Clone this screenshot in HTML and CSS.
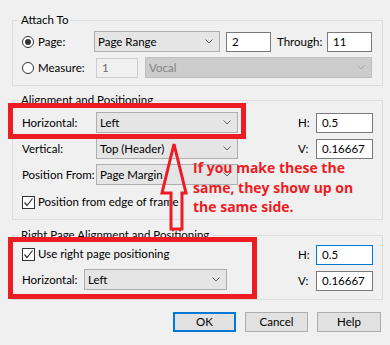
FILE: index.html
```html
<!DOCTYPE html>
<html lang="en">
<head>
  <meta charset="UTF-8">
  <title>Attach To</title>
  <link rel="stylesheet" href="styles.css">
</head>
<body>
  <div class="dialog">
    <fieldset class="group group-attach">
      <legend>Attach To</legend>
      <div class="row">
        <span class="option"><span class="radio on"></span>Page:</span>
        <div class="select select-range">Page Range<svg class="chev" width="8" height="5" viewBox="0 0 8 5"><polyline points="0.5,0.5 4,4 7.5,0.5"/></svg></div>
        <div class="textbox box-num">2</div>
        <span class="through">Through:</span>
        <div class="textbox box-num">11</div>
      </div>
      <div class="row">
        <span class="option option-wide"><span class="radio"></span>Measure:</span>
        <div class="textbox disabled box-measure">1</div>
        <div class="select disabled select-vocal">Vocal<svg class="chev" width="8" height="5" viewBox="0 0 8 5"><polyline points="0.5,0.5 4,4 7.5,0.5"/></svg></div>
      </div>
    </fieldset>

    <fieldset class="group group-align">
      <legend>Alignment and Positioning</legend>
      <div class="row">
        <span class="label">Horizontal:</span>
        <div class="select select-align">Left<svg class="chev" width="8" height="5" viewBox="0 0 8 5"><polyline points="0.5,0.5 4,4 7.5,0.5"/></svg></div>
        <span class="pos"><span class="pos-label">H:</span><span class="textbox box-pos">0.5</span></span>
      </div>
      <div class="row">
        <span class="label">Vertical:</span>
        <div class="select select-align">Top (Header)<svg class="chev" width="8" height="5" viewBox="0 0 8 5"><polyline points="0.5,0.5 4,4 7.5,0.5"/></svg></div>
        <span class="pos"><span class="pos-label">V:</span><span class="textbox box-pos">0.16667</span></span>
      </div>
      <div class="row">
        <span class="label">Position From:</span>
        <div class="select select-align">Page Margin<svg class="chev" width="8" height="5" viewBox="0 0 8 5"><polyline points="0.5,0.5 4,4 7.5,0.5"/></svg></div>
      </div>
      <div class="check-row">
        <span class="checkbox"><svg width="11" height="11" viewBox="0 0 11 11"><polyline points="1.5,5.5 4,8.5 9.5,1.5"/></svg></span>Position from edge of frame
      </div>
    </fieldset>

    <fieldset class="group group-right">
      <legend>Right Page Alignment and Positioning</legend>
      <div class="split">
        <div class="col-left">
          <div class="check-row check-first">
            <span class="checkbox"><svg width="11" height="11" viewBox="0 0 11 11"><polyline points="1.5,5.5 4,8.5 9.5,1.5"/></svg></span>Use right page positioning
          </div>
          <div class="row row-right">
            <span class="label label-short">Horizontal:</span>
            <div class="select select-right">Left<svg class="chev" width="8" height="5" viewBox="0 0 8 5"><polyline points="0.5,0.5 4,4 7.5,0.5"/></svg></div>
          </div>
        </div>
        <div class="col-pos">
          <span class="pos"><span class="pos-label">H:</span><span class="textbox box-pos focused">0.5</span></span>
          <span class="pos"><span class="pos-label">V:</span><span class="textbox box-pos">0.16667</span></span>
        </div>
      </div>
    </fieldset>

    <div class="actions">
      <button class="btn btn-default">OK</button>
      <button class="btn">Cancel</button>
      <button class="btn btn-help">Help</button>
    </div>

    <!-- annotations drawn on top of the screenshot -->
    <div class="mark mark-top"></div>
    <div class="mark mark-bottom"></div>
    <svg class="arrow" width="40" height="100" viewBox="0 0 40 100">
      <polygon points="20,3 32,52 28,52 28,88 17,88 17,52 8,52"/>
    </svg>
    <p class="note">If you make these the same, they show up on the same side.</p>
  </div>
</body>
</html>
```

FILE: styles.css
```css
body {
  margin: 0;
  background: #f0f0f0;
  font: 11.5px/16px Lato, "Noto Sans", sans-serif;
  color: #000;
}

.dialog {
  position: relative;
  width: 390px;
  height: 345px;
  padding-top: 12px;
  box-sizing: border-box;
  overflow: hidden;
}

.group {
  margin: 0 7px 0 12px;
  padding: 3px 9px 7px 9px;
  border: 1px solid #dcdcdc;
  min-width: 0;
}

.group legend {
  padding: 0 2px;
  margin-left: -3px;
}

.group-align {
  margin-top: 6px;
  padding-top: 4px;
  padding-bottom: 9px;
}

.group-right {
  margin-top: 7px;
  padding-top: 2px;
  padding-bottom: 8px;
}

.row {
  display: flex;
  align-items: center;
  height: 21px;
  white-space: nowrap;
}

.row + .row {
  margin-top: 5px;
}

/* controls */
.select {
  display: flex;
  align-items: center;
  justify-content: space-between;
  height: 21px;
  padding: 0 6px 0 3px;
  box-sizing: border-box;
  border: 1px solid #adadad;
  background: #e5e5e5;
  white-space: nowrap;
}

.chev {
  flex: none;
}

.chev polyline {
  fill: none;
  stroke: #606060;
  stroke-width: 1;
}

.textbox {
  display: flex;
  align-items: center;
  height: 20px;
  padding: 0 5px;
  box-sizing: border-box;
  border: 1px solid #7a7a7a;
  background: #fff;
}

.textbox.focused {
  border-color: #0078d7;
}

.select.disabled {
  background: #cccccc;
  border-color: #bfbfbf;
  color: #838383;
}

.select.disabled .chev polyline {
  stroke: #a6a6a6;
}

.textbox.disabled {
  background: #f0f0f0;
  border-color: #cccccc;
  color: #6d6d6d;
}

/* attach to */
.option {
  display: flex;
  align-items: center;
  width: 72px;
  flex: none;
}

.option-wide {
  width: 74px;
}

.radio {
  width: 12px;
  height: 12px;
  margin-right: 4px;
  box-sizing: border-box;
  border: 1px solid #333;
  border-radius: 50%;
  background: #fff;
  position: relative;
}

.radio.on::after {
  content: "";
  position: absolute;
  left: 2px;
  top: 2px;
  width: 6px;
  height: 6px;
  border-radius: 50%;
  background: #333;
}

.select-range {
  width: 126px;
  margin-right: 6px;
}

.box-num {
  width: 45px;
}

.through {
  width: 50px;
  margin-left: 6px;
}

.box-measure {
  width: 42px;
}

.select-vocal {
  width: 227px;
  margin-left: 7px;
}

/* alignment */
.label {
  width: 74px;
  flex: none;
}

.label-short {
  width: 62px;
}

.select-align {
  width: 142px;
  flex: none;
}

.select-right {
  width: 143px;
  flex: none;
}

.pos {
  display: flex;
  align-items: center;
  margin-left: auto;
}

.pos-label {
  width: 18px;
}

.box-pos {
  width: 57px;
}

.check-row {
  display: flex;
  align-items: center;
  height: 16px;
  margin-top: 9px;
  white-space: nowrap;
}

.check-first {
  margin-top: 1px;
}

.checkbox {
  display: flex;
  width: 13px;
  height: 13px;
  margin-right: 3px;
  box-sizing: border-box;
  border: 1px solid #333;
  background: #fff;
}

.checkbox polyline {
  fill: none;
  stroke: #333;
  stroke-width: 1.2;
}

.split {
  display: flex;
  justify-content: space-between;
}

.row-right {
  margin-top: 7px;
}

.col-pos {
  display: flex;
  flex-direction: column;
  gap: 6px;
}

/* buttons */
.actions {
  display: flex;
  justify-content: flex-end;
  gap: 9px;
  margin: 12px 9px 0 0;
}

.btn {
  width: 63px;
  height: 20px;
  padding: 0;
  border: 1px solid #adadad;
  background: #e1e1e1;
  font: inherit;
  color: #000;
}

.btn-default {
  border: 2px solid #0078d7;
}

.btn-help {
  width: 64px;
}

/* annotations */
.mark {
  position: absolute;
  border: 5px solid #ed1c24;
  box-sizing: border-box;
}

.mark-top {
  left: 8px;
  top: 103px;
  width: 238px;
  height: 36px;
}

.mark-bottom {
  left: 8px;
  top: 237px;
  width: 249px;
  height: 62px;
}

.arrow {
  position: absolute;
  left: 154px;
  top: 141px;
}

.arrow polygon {
  fill: none;
  stroke: #ed1c24;
  stroke-width: 3;
  stroke-linejoin: miter;
}

.note {
  position: absolute;
  left: 193px;
  top: 158px;
  width: 170px;
  margin: 0;
  font: bold 14px/19.5px "Open Sans", "Noto Sans", sans-serif;
  color: #ed1c24;
}
```
